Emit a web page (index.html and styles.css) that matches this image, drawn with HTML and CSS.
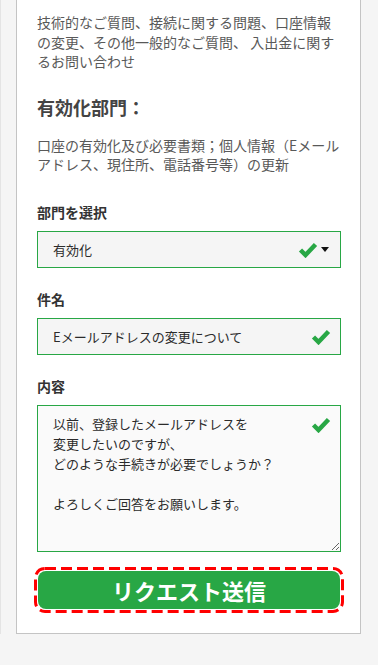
FILE: index.html
```html
<!DOCTYPE html>
<html lang="ja">
  <head>
    <meta charset="UTF-8" />
    <meta name="viewport" content="width=device-width, initial-scale=1.0" />
    <title>お問い合わせ</title>
    <link rel="stylesheet" href="styles.css">
  </head>
  <body>
    <div class="side">
      <section class="kort">
        <p class="tekst">技術的なご質問、接続に関する問題、口座情報の変更、その他一般的なご質問、 入出金に関するお問い合わせ</p>

        <h2>有効化部門：</h2>
        <p class="tekst">口座の有効化及び必要書類；個人情報（Eメールアドレス、現住所、電話番号等）の更新</p>

        <form>
          <div class="felt">
            <label for="afdeling">部門を選択</label>
            <div class="boks">
              <select id="afdeling">
                <option>有効化</option>
              </select>
              <svg class="flueben vaelg" width="20" height="17" viewBox="0 0 20 17"><path d="M2.5 9 L7.5 14 L17.5 3.5" fill="none" stroke="#28a745" stroke-width="4.5"/></svg>
              <span class="pil"></span>
            </div>
          </div>

          <div class="felt">
            <label for="emne">件名</label>
            <div class="boks">
              <input id="emne" type="text" value="Eメールアドレスの変更について">
              <svg class="flueben" width="20" height="17" viewBox="0 0 20 17"><path d="M2.5 9 L7.5 14 L17.5 3.5" fill="none" stroke="#28a745" stroke-width="4.5"/></svg>
            </div>
          </div>

          <div class="felt">
            <label for="indhold">内容</label>
            <div class="boks">
              <textarea id="indhold">以前、登録したメールアドレスを
変更したいのですが、
どのような手続きが必要でしょうか？

よろしくご回答をお願いします。</textarea>
              <svg class="flueben top" width="20" height="17" viewBox="0 0 20 17"><path d="M2.5 9 L7.5 14 L17.5 3.5" fill="none" stroke="#28a745" stroke-width="4.5"/></svg>
            </div>
          </div>

          <div class="ramme">
            <button type="button" class="send">リクエスト送信</button>
            <svg class="streg" width="310" height="46" viewBox="0 0 310 46"><rect x="1.5" y="1.5" width="307" height="43" rx="9.5" fill="none" stroke="#f00" stroke-width="3" stroke-dasharray="11 5"/></svg>
          </div>
        </form>
      </section>
    </div>
  </body>
</html>
```

FILE: styles.css
```css
body {
  margin: 0;
  background-color: #f5f5f5;
  font-family: "Noto Sans CJK JP", "Noto Sans", sans-serif;
}
.side {
  border-left: 1px solid #e4e4e4;
  padding: 0 17px 0 15px;
}
.kort {
  background-color: white;
  border: 1px solid #c4c4c4;
  border-top: none;
  padding: 13px 19px 20px 20px;
}
.tekst {
  margin: 0;
  font-size: 14px;
  line-height: 19.6px;
  color: #595959;
}
h2 {
  margin: 22px 0 16px;
  font-size: 18px;
  line-height: 26px;
  color: #444;
}
.felt {
  margin-top: 21px;
}
.felt:first-child {
  margin-top: 27px;
}
label {
  display: block;
  font-size: 14px;
  font-weight: bold;
  line-height: 20px;
  color: #333;
  margin-bottom: 9px;
}
.boks {
  position: relative;
}
select,
input,
textarea {
  display: block;
  width: 100%;
  box-sizing: border-box;
  margin: 0;
  border: 1px solid #28a745;
  border-radius: 0;
  background-color: #f5f5f5;
  font-family: inherit;
  font-size: 13px;
  color: #2b2b2b;
  outline: none;
}
select,
input {
  height: 37px;
  padding: 0 40px 0 15px;
  appearance: none;
}
textarea {
  height: 147px;
  padding: 8px 40px 8px 15px;
  line-height: 20px;
  background-color: #fafafa;
}
.flueben {
  position: absolute;
  right: 10px;
  top: 10px;
}
.flueben.vaelg {
  right: 23px;
}
.flueben.top {
  top: 11px;
}
.pil {
  position: absolute;
  right: 12px;
  top: 16px;
  border-left: 4.5px solid transparent;
  border-right: 4.5px solid transparent;
  border-top: 5px solid #111;
}
.ramme {
  position: relative;
  margin: 15px -3px 0;
  padding: 4px;
}
.streg {
  position: absolute;
  left: 0;
  top: 0;
  pointer-events: none;
}
.send {
  display: block;
  width: 100%;
  height: 38px;
  border: none;
  border-radius: 8px;
  background-color: #28a745;
  color: white;
  font-family: inherit;
  font-size: 22px;
  font-weight: bold;
}
```
